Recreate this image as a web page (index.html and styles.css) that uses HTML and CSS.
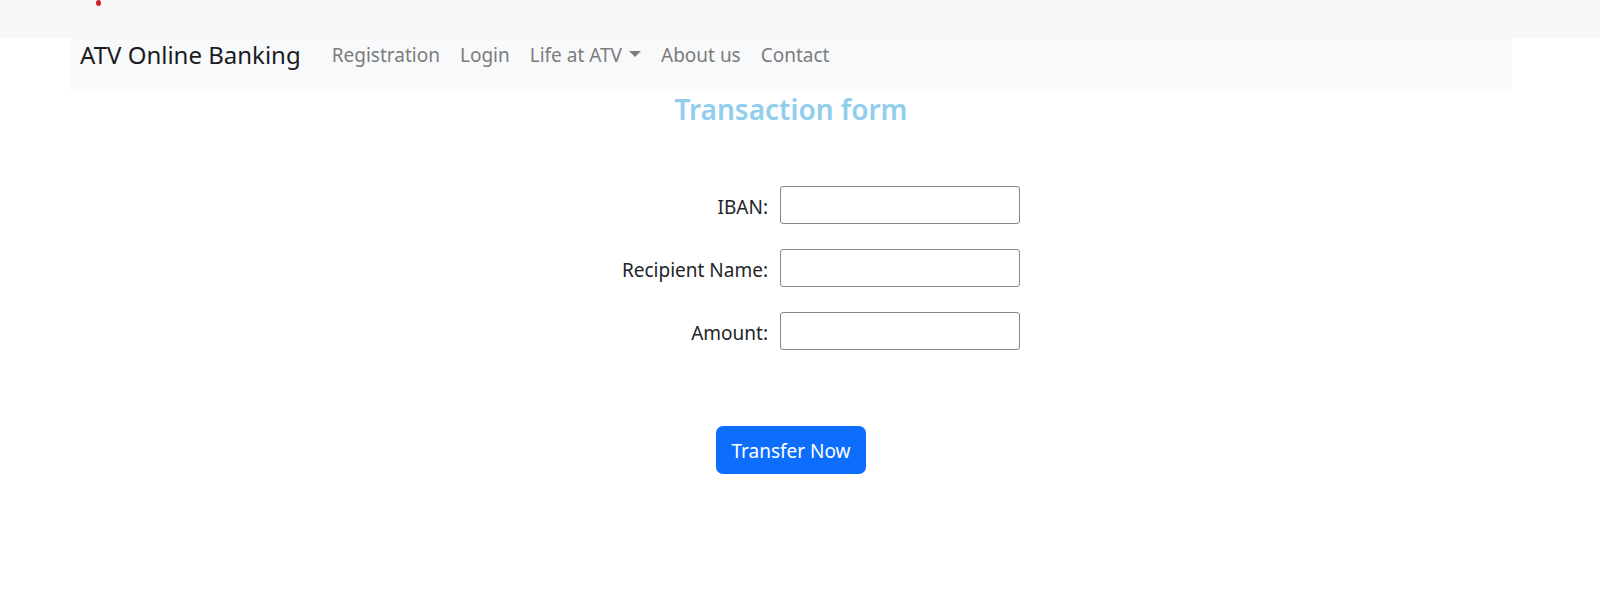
FILE: index.html
```html
<!DOCTYPE html>
<html lang="en">
<head>
  <meta charset="utf-8">
  <meta name="viewport" content="width=device-width, initial-scale=1">
  <title>ATV Online Banking</title>
  <link rel="stylesheet" href="styles.css">
</head>
<body>
  <div class="topbar"><span class="dot"></span></div>
  <div class="container">
    <nav class="navbar">
      <a class="brand" href="#">ATV Online Banking</a>
      <ul class="nav-list">
        <li><a class="nav-link" href="#">Registration</a></li>
        <li><a class="nav-link" href="#">Login</a></li>
        <li><a class="nav-link dropdown" href="#">Life at ATV</a></li>
        <li><a class="nav-link" href="#">About us</a></li>
        <li><a class="nav-link" href="#">Contact</a></li>
      </ul>
    </nav>
    <main>
      <h1 class="title">Transaction form</h1>
      <form class="form">
        <div class="fields">
          <label class="label" for="iban">IBAN:</label>
          <input class="input" id="iban" type="text">
          <label class="label" for="recipient">Recipient Name:</label>
          <input class="input" id="recipient" type="text">
          <label class="label" for="amount">Amount:</label>
          <input class="input" id="amount" type="text">
        </div>
        <button class="button" type="submit">Transfer Now</button>
      </form>
    </main>
  </div>
</body>
</html>
```

FILE: styles.css
```css
* {
  box-sizing: border-box;
}

body {
  margin: 0;
  background: #fff;
  color: #212529;
  font-family: "Noto Sans", "Open Sans", sans-serif;
  font-size: 19px;
  line-height: 30px;
}

.topbar {
  height: 38px;
  padding-left: 96px;
  background: #f7f7f7;
}

.dot {
  display: block;
  width: 5px;
  height: 6px;
  border-radius: 50%;
  background: #d02228;
}

.container {
  margin: 0 88px 0 70px;
}

.navbar {
  display: flex;
  align-items: center;
  gap: 31px;
  padding: 0 10px 17px;
  background: #f8f9fb;
  line-height: 34px;
}

.brand {
  color: #1a1c1e;
  font-size: 24px;
  text-decoration: none;
}

.nav-list {
  display: flex;
  gap: 20px;
  margin: 0;
  padding: 0;
  list-style: none;
}

.nav-link {
  color: #7b7c7d;
  text-decoration: none;
}

.dropdown::after {
  content: "";
  display: inline-block;
  margin-left: 7px;
  border: 6px solid transparent;
  border-top-color: currentColor;
  border-bottom: 0;
  vertical-align: 5px;
}

.title {
  margin: 0;
  color: #8fceed;
  font-size: 28px;
  font-weight: 600;
  line-height: 40px;
  text-align: center;
}

.form {
  display: flex;
  flex-direction: column;
  align-items: center;
  gap: 76px;
  padding: 57px 0;
}

.fields {
  display: grid;
  grid-template-columns: 206px 240px;
  align-items: center;
  gap: 25px 12px;
}

.label {
  padding-top: 4px;
  text-align: right;
}

.input {
  height: 38px;
  padding: 0 8px;
  border: 1px solid #86868a;
  border-radius: 3px;
  background: #fff;
  color: inherit;
  font: inherit;
}

.button {
  padding: 10px 15px 8px;
  border: 0;
  border-radius: 7px;
  background: #0d6efd;
  color: #fff;
  font: inherit;
}
```
